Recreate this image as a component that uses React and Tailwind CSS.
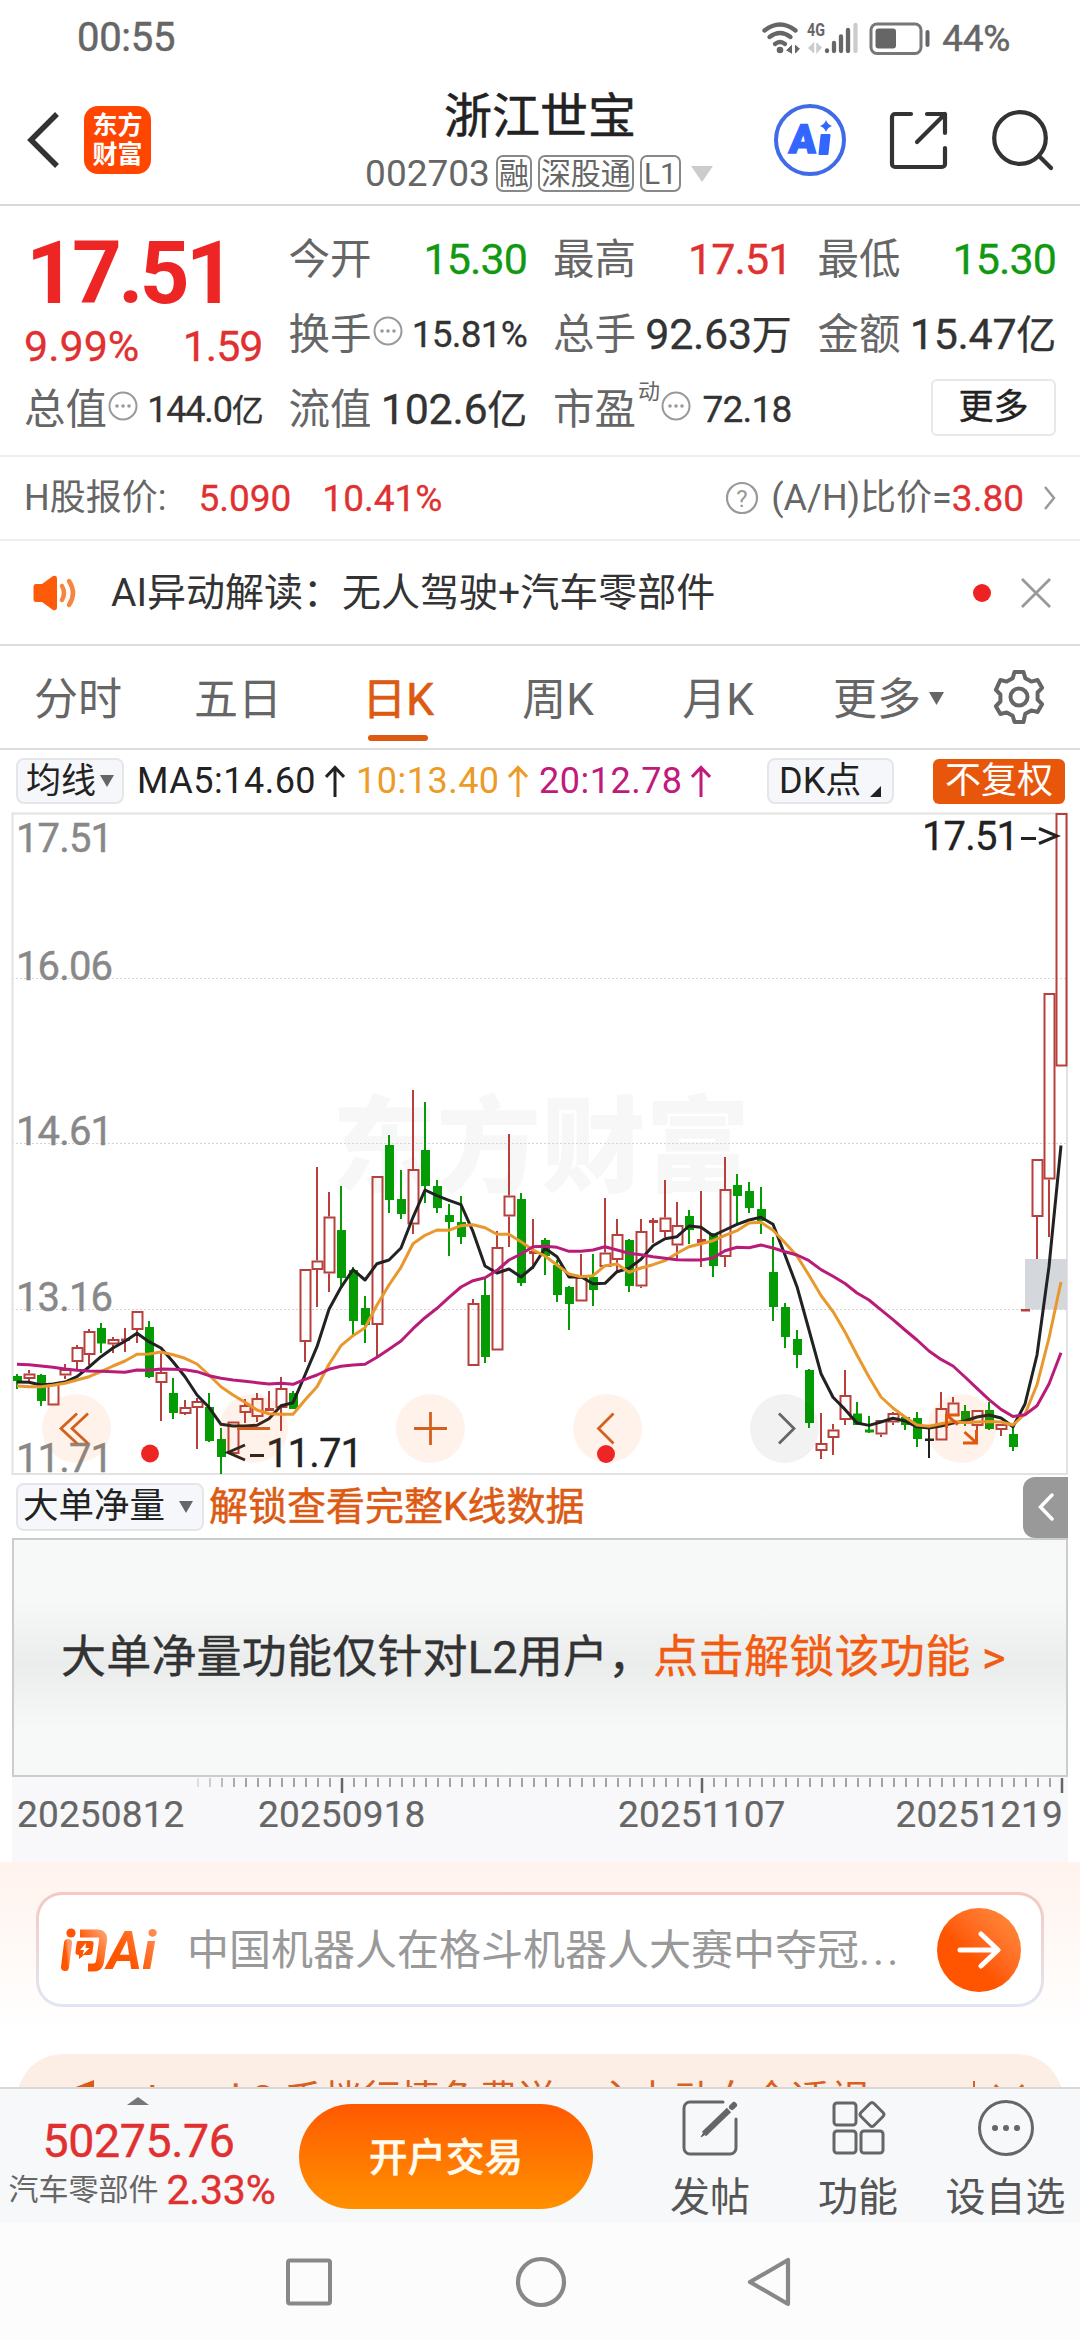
import React from 'react';

const RED = '#b8403c';
const GREEN = '#049b04';

// [direction, body top, body bottom, wick top, wick bottom]
const candles = [
  ['g', 1376, 1381, 1374, 1389], ['r', 1373.5, 1379, 1370, 1382], ['g', 1375, 1401, 1374, 1406], ['r', 1384, 1405.5, 1384, 1405],
  ['r', 1369, 1375.5, 1364, 1379], ['r', 1347, 1362, 1345, 1370], ['r', 1331, 1355, 1329, 1365], ['g', 1328, 1343.5, 1323, 1353],
  ['r', 1339, 1344.5, 1337, 1353], ['f', 1338.5, 1341, 1328, 1352], ['r', 1311, 1330, 1311, 1343], ['g', 1327, 1377, 1321, 1378],
  ['r', 1372, 1383, 1353, 1421], ['g', 1393, 1413, 1378, 1419], ['r', 1407, 1414, 1400, 1415], ['r', 1401, 1408, 1398, 1449],
  ['g', 1407, 1441, 1393, 1442], ['g', 1439, 1457, 1428, 1474], ['r', 1421.5, 1454, 1422, 1454], ['r', 1405, 1413, 1399, 1423],
  ['r', 1398, 1417, 1393, 1422], ['f', 1408, 1411, 1391, 1411], ['r', 1388, 1408, 1377, 1431], ['g', 1393, 1409, 1391, 1409],
  ['r', 1269, 1342, 1269, 1362], ['r', 1260.5, 1270, 1167, 1307], ['r', 1216.5, 1273.5, 1192, 1292], ['g', 1230, 1278, 1186, 1287],
  ['g', 1270, 1321, 1267, 1335], ['g', 1308, 1325, 1296, 1343], ['r', 1176, 1325, 1176, 1357], ['g', 1145, 1200, 1135, 1213],
  ['g', 1199, 1214, 1170, 1219], ['r', 1169, 1224.5, 1090, 1234], ['g', 1150, 1186, 1102, 1203], ['g', 1186, 1208, 1180, 1213],
  ['g', 1215, 1222, 1204, 1256], ['g', 1222, 1237, 1196, 1244], ['r', 1303, 1366, 1299, 1366], ['g', 1295, 1357, 1279, 1363],
  ['r', 1247, 1350.5, 1231, 1350], ['r', 1195.5, 1216.5, 1134, 1247], ['g', 1199, 1283, 1193, 1286], ['f', 1251, 1254, 1219, 1269],
  ['g', 1240, 1256, 1238, 1275], ['g', 1265, 1295, 1260, 1302], ['g', 1287, 1304, 1286, 1330], ['r', 1277, 1301.5, 1254, 1301],
  ['g', 1277, 1290, 1254, 1306], ['r', 1252.5, 1267, 1198, 1267], ['r', 1234, 1260, 1219, 1271], ['g', 1240, 1286, 1239, 1292],
  ['r', 1231, 1286.5, 1219, 1288], ['f', 1220, 1223, 1218, 1243], ['r', 1217.5, 1232, 1180, 1237], ['r', 1225, 1245.5, 1202, 1259],
  ['g', 1216, 1230, 1210, 1244], ['f', 1239, 1243, 1191, 1267], ['g', 1235, 1266, 1233, 1277], ['r', 1189, 1257, 1157, 1267],
  ['g', 1185, 1196, 1174, 1224], ['g', 1191, 1208, 1182, 1213], ['g', 1209, 1221, 1187, 1234], ['g', 1272, 1307, 1237, 1321],
  ['g', 1307, 1337, 1303, 1348], ['g', 1339, 1355, 1330, 1368], ['g', 1370, 1423, 1369, 1428], ['r', 1443, 1451, 1413, 1459],
  ['r', 1429.5, 1438, 1424, 1455], ['r', 1395, 1420, 1370, 1425], ['g', 1413.5, 1425, 1402, 1425], ['h', 1429.5, 1432.5, 1416, 1433],
  ['r', 1420, 1434.5, 1420, 1437], ['r', 1413, 1422.5, 1412, 1425], ['g', 1417, 1425, 1416, 1430], ['g', 1418, 1439, 1412, 1447],
  ['k', 1438.5, 1441, 1429, 1458], ['r', 1408, 1440.5, 1392, 1440], ['r', 1402.5, 1416, 1397, 1416], ['g', 1411, 1421, 1405, 1426],
  ['r', 1410, 1426, 1410, 1430], ['g', 1410, 1429, 1402, 1430], ['r', 1424, 1430, 1424, 1436], ['g', 1434, 1447, 1427, 1451],
  ['f', 1309, 1311.5, 1309, 1311], ['r', 1159, 1217, 1159, 1259], ['r', 993, 1179.5, 993, 1237], ['r', 813, 1066.5, 813, 1066],
];

const ma5 = [
  1382, 1382.3, 1385, 1384, 1382, 1376.7, 1367, 1356.7, 1348, 1341.3, 1333.3, 1341.7, 1348, 1361.7, 1376.7, 1395, 1407.3, 1424.3,
  1426, 1426, 1425.3, 1418.7, 1405.7, 1402.7, 1375, 1346.7, 1309.3, 1287.3, 1269.7, 1280, 1263.7, 1260, 1248, 1217.3, 1190, 1195.7,
  1200.3, 1204.7, 1231.7, 1266, 1273, 1269, 1277, 1267, 1248.3, 1256.7, 1277, 1276.7, 1283.7, 1283.3, 1271.7, 1268.3, 1259.3,
  1245.7, 1238.7, 1236.7, 1226, 1227.3, 1235.7, 1230, 1224.3, 1220, 1217.3, 1224.3, 1255, 1286.7, 1330, 1373.7, 1397.3, 1409.4,
  1423, 1425.4, 1422, 1418.3, 1421, 1426.8, 1428, 1426, 1423, 1421, 1417, 1415, 1418, 1426.8, 1404, 1355, 1266.5, 1145.5,
];

const ma10 = [
  1386, 1386.7, 1386.7, 1385.3, 1383.3, 1380, 1376.7, 1371.7, 1366, 1361, 1354.3, 1354, 1352, 1354.7, 1358.3, 1364, 1375, 1386.7,
  1395, 1402.3, 1410, 1413.7, 1414.3, 1414.3, 1400, 1386.7, 1364.3, 1345.7, 1335.7, 1327.7, 1305, 1285, 1267.3, 1243.7, 1235.3,
  1230, 1230.3, 1225.7, 1224.7, 1227.7, 1234.3, 1234.3, 1241.7, 1250, 1256, 1265, 1274, 1276.7, 1275.7, 1265.7, 1264, 1272.3, 1268,
  1264.7, 1260.7, 1253.3, 1246.7, 1243.7, 1240.7, 1235.3, 1230.7, 1223, 1222.3, 1230.3, 1242.7, 1256, 1275.3, 1295.5, 1311.6,
  1332, 1355, 1377, 1397, 1408, 1417, 1425, 1426.3, 1423.7, 1421.4, 1422.8, 1422, 1421.4, 1422, 1425, 1414, 1384.8, 1338, 1282,
];

const ma20 = [
  1364.3, 1364.7, 1366, 1367.3, 1369, 1370.3, 1371, 1371.3, 1371.7, 1372.3, 1370, 1370.3, 1369, 1369.3, 1369.7, 1371.7, 1375.7,
  1378.3, 1380, 1381.3, 1382.7, 1384, 1383.3, 1384.3, 1379.3, 1375, 1369.3, 1366.3, 1365, 1364.3, 1357.3, 1349.3, 1341, 1328.7,
  1317.7, 1308.3, 1297.3, 1287, 1280.7, 1277.7, 1270.3, 1260, 1254, 1246.7, 1246.3, 1247.3, 1251.3, 1251.3, 1250, 1246.7, 1250,
  1253.3, 1254.7, 1256.7, 1258.3, 1259.7, 1260, 1260, 1258, 1250.7, 1247.3, 1247.7, 1245, 1248, 1251.7, 1255, 1260.7, 1269.6,
  1276.3, 1283.5, 1293, 1300, 1309.8, 1319.6, 1330, 1340, 1351, 1359.4, 1366, 1377, 1388.4, 1399.6, 1409.4, 1416.5, 1414.7,
  1405.8, 1384, 1352.7,
];

const cx = (i) => 17 + i * 12;
const toPoints = (values) => values.map((y, i) => `${cx(i)},${y}`).join(' ');

function Candle({ data, x }) {
  const [kind, top, bottom, high, low] = data;
  if (kind === 'r') {
    return (
      <g stroke={RED} strokeWidth="2" fill="none">
        {high < top && <path d={`M${x} ${high}V${top}`} />}
        {low > bottom && <path d={`M${x} ${bottom}V${low}`} />}
        <rect x={x - 4.5} y={top + 1} width="10" height={bottom - top - 2} />
      </g>
    );
  }
  const color = kind === 'f' ? RED : kind === 'k' ? '#222' : GREEN;
  return (
    <g fill={color}>
      <rect x={x - 1} y={high} width="2" height={low - high} />
      <rect x={x - 4} y={top} width="9" height={bottom - top} />
    </g>
  );
}

function StatusBar() {
  return (
    <div className="flex h-[75px] items-center pl-[77px] pr-[70px] pt-px text-[#666]">
      <span className="text-[40px] leading-none tracking-[-0.3px] [-webkit-text-stroke:0.5px_currentColor]">00:55</span>
      <svg width="178" height="40" viewBox="760 16 178 40" className="ml-auto">
        <g fill="none" stroke="#666" strokeWidth="4.400" strokeLinecap="round">
          <path d="M764.5 28.5Q780 16.500 795.500 28.500" />
          <path d="M769.500 35Q780 27 790.500 35" />
          <path d="M775 42Q780 38 785 42" />
        </g>
        <circle cx="780" cy="48" r="3.300" fill="#666" />
        <path d="M786.500 48.500l5-5v8M799.500 46.500l-4 4.500v-8" fill="#666" stroke="#666" strokeWidth="1" />
        <text x="807" y="34" fontSize="18.500" fontWeight="700" fill="#666" textLength="18" lengthAdjust="spacingAndGlyphs">4G</text>
        <path d="M808.500 46.500l5-5v9.500M821.500 45l-4.500 5v-9" fill="#ccc" stroke="#ccc" strokeWidth="1.500" />
        <g strokeWidth="4.300" strokeLinecap="round" stroke="#666">
          <path d="M827 48.500v.5M834 41v8M841 34.500V49M848 28v21" />
          <path d="M855.500 23v26" stroke="#ccc" />
        </g>
        <rect x="871" y="22" width="50" height="29.500" rx="6" fill="none" stroke="#777" strokeWidth="3" />
        <rect x="875.500" y="26.500" width="20.500" height="20" rx="3" fill="#666" />
        <path d="M927.500 30v13" stroke="#666" strokeWidth="4" strokeLinecap="round" />
      </svg>
      <span className="ml-1 text-[37px] leading-none tracking-[-0.3px] [-webkit-text-stroke:0.5px_currentColor]">44%</span>
    </div>
  );
}

function Header() {
  return (
    <header className="flex h-[131px] items-center justify-between border-b-2 border-[#d8d8d8] pl-[26px] pr-[26px]">
      <div className="flex w-[330px] items-center">
        <svg width="34" height="58" viewBox="0 0 34 58" fill="none" stroke="#333" strokeWidth="5.500">
          <path d="M31 3L5 29l26 26" />
        </svg>
        <div className="ml-6 flex h-[68px] w-[67px] flex-col items-center justify-center rounded-[14px] bg-[#ff4500] text-[25px] font-bold leading-[29px] text-white">
          <span>东方</span>
          <span>财富</span>
        </div>
      </div>
      <div className="flex flex-col items-center pt-1">
        <h1 className="text-[48px] leading-[64px] text-[#222] [-webkit-text-stroke:0.5px_#222]">浙江世宝</h1>
        <div className="flex h-[50px] items-center gap-[6px] text-[30px] text-[#666]">
          <span className="-ml-[2px] text-[37px] leading-none">002703</span>
          <span className="flex h-[37px] items-center rounded-[7px] border-2 border-[#888] px-[1px] leading-none">融</span>
          <span className="flex h-[37px] items-center rounded-[7px] border-2 border-[#888] px-[1px] leading-none">深股通</span>
          <span className="flex h-[37px] items-center rounded-[7px] border-2 border-[#888] px-[2px] leading-none">L1</span>
          <svg width="22" height="16" viewBox="0 0 22 16" className="ml-1"><path d="M0 0h22L11 16z" fill="#ccc" /></svg>
        </div>
      </div>
      <div className="flex w-[330px] items-center justify-end">
        <svg width="74" height="74" viewBox="0 0 74 74">
          <circle cx="37" cy="37" r="34" fill="#fff" stroke="#3f6be8" strokeWidth="4" />
          <text x="15" y="50" fontSize="40" fontWeight="900" fill="#3366ff" stroke="#3366ff" strokeWidth="1.500" transform="skewX(-4) translate(4 0)" textLength="27" lengthAdjust="spacingAndGlyphs">A</text>
          <path d="M48.500 32h8l-2 19h-8z" fill="#3366ff" stroke="#3366ff" strokeWidth="2" strokeLinejoin="round" />
          <path d="M53 17q1.500 4.500 6 6q-4.500 1.500-6 6q-1.500-4.500-6-6q4.500-1.500 6-6z" fill="#3366ff" />
        </svg>
        <svg width="62" height="62" viewBox="0 0 62 62" fill="none" stroke="#333" strokeWidth="4.200" strokeLinecap="round" strokeLinejoin="round" className="ml-[41px]">
          <path d="M23 5H7a3 3 0 0 0-3 3v47a3 3 0 0 0 3 3h47a3 3 0 0 0 3-3V39" />
          <path d="M39 5h18v19M57 5L29 33" />
        </svg>
        <svg width="64" height="64" viewBox="0 0 64 64" fill="none" stroke="#333" strokeWidth="4.200" strokeLinecap="round" className="ml-[40px]">
          <circle cx="30" cy="30" r="25.800" />
          <path d="M49 48l12 12" />
        </svg>
      </div>
    </header>
  );
}

function DotsIcon() {
  return (
    <svg width="30" height="30" viewBox="0 0 30 30" className="mb-2 ml-px shrink-0">
      <circle cx="15" cy="15" r="13.500" fill="none" stroke="#999" strokeWidth="2" />
      <g fill="#999"><circle cx="9" cy="15" r="1.800" /><circle cx="15" cy="15" r="1.800" /><circle cx="21" cy="15" r="1.800" /></g>
    </svg>
  );
}

function Quote({ label, value, unit, color = 'text-[#333]', small, sup }) {
  const size = small
    ? unit ? 'text-[36px] tracking-[-1.2px]' : 'text-[37px] tracking-[-0.8px]'
    : unit ? 'text-[43px] tracking-[-0.3px]' : 'text-[43px] tracking-[-0.9px]';
  return (
    <div className="flex h-[75px] items-center whitespace-nowrap">
      <span className="text-[41.5px] text-[#666]">{label}</span>
      {sup && <span className="mb-9 ml-[2px] text-[22px] text-[#666]">{sup}</span>}
      {small && <DotsIcon />}
      <span className={`ml-auto [-webkit-text-stroke:0.3px_currentColor] ${color} ${size}`}>
        {value}
        {unit && <span className={small ? 'text-[32px]' : 'text-[40px]'}>{unit}</span>}
      </span>
    </div>
  );
}

function QuotePanel() {
  const green = 'text-[#119911]';
  const red = 'text-[#e03030]';
  return (
    <section className="grid h-[251px] grid-cols-4 content-start gap-x-[26px] border-b-2 border-[#eee] px-6 pt-[16px] leading-none">
      <div className="row-span-2 flex flex-col">
        <div className="flex h-[94px] items-end pl-[2px] text-[87px] font-bold leading-[86px] tracking-[-3.8px] text-[#ee2525]">17.51</div>
        <div className={`flex h-[56px] items-center justify-between pt-[5px] text-[43px] [-webkit-text-stroke:0.3px_currentColor] ${red}`}>
          <span>9.99%</span>
          <span className="tracking-[-1px]">1.59</span>
        </div>
      </div>
      <Quote label="今开" value="15.30" color={green} />
      <Quote label="最高" value="17.51" color={red} />
      <Quote label="最低" value="15.30" color={green} />
      <Quote label="换手" value="15.81%" small />
      <Quote label="总手" value="92.63" unit="万" />
      <Quote label="金额" value="15.47" unit="亿" />
      <Quote label="总值" value="144.0" unit="亿" small />
      <Quote label="流值" value="102.6" unit="亿" />
      <Quote label="市盈" value="72.18" small sup="动" />
      <div className="flex h-[75px] items-center justify-end">
        <button className="mb-1 flex h-[57px] w-[125px] items-center justify-center rounded-md border-2 border-[#e8e8e8] text-[35px] text-[#222] [-webkit-text-stroke:0.4px_#222]">更多</button>
      </div>
    </section>
  );
}

function HShareRow() {
  return (
    <section className="flex h-[84px] items-center border-b-2 border-[#eee] pl-6 pr-[23px] text-[36px] leading-none text-[#666]">
      <span>H股报价:</span>
      <span className="ml-[32px] text-[37px] text-[#e03030] [-webkit-text-stroke:0.3px_currentColor]">5.090</span>
      <span className="ml-[31px] text-[37px] text-[#e03030] [-webkit-text-stroke:0.3px_currentColor]">10.41%</span>
      <svg width="34" height="34" viewBox="0 0 34 34" className="ml-auto mr-3">
        <circle cx="17" cy="17" r="15" fill="none" stroke="#999" strokeWidth="2.200" />
        <text x="17" y="25.500" fontSize="24" fill="#999" textAnchor="middle">?</text>
      </svg>
      <span>(A/H)比价=</span>
      <span className="text-[37px] text-[#e03030] [-webkit-text-stroke:0.3px_currentColor]">3.80</span>
      <svg width="14" height="24" viewBox="0 0 14 24" fill="none" stroke="#999" strokeWidth="2.500" className="ml-[19px]"><path d="M2 1l9 11-9 11" /></svg>
    </section>
  );
}

function AiNotice() {
  return (
    <section className="flex h-[105px] items-center border-b-2 border-[#ddd] pl-[32px] pr-[28px] text-[39px] leading-none text-[#333]">
      <svg width="48" height="38" viewBox="0 0 48 38">
        <path d="M4 10h6L21 2q4-1 4 3v28q0 4-4 3l-11-8H4q-2.500 0-2.500-3V13q0-3 2.500-3z" fill="#ff5a08" />
        <path d="M30 12q4 7 0 14M37 7q8 12 0 24" fill="none" stroke="#f5853f" strokeWidth="4.500" strokeLinecap="round" />
      </svg>
      <span className="ml-[31px] pt-px">AI异动解读：无人驾驶+汽车零部件</span>
      <span className="ml-auto h-[18px] w-[18px] rounded-full bg-[#ee2222]" />
      <svg width="32" height="32" viewBox="0 0 32 32" stroke="#999" strokeWidth="2.800" className="ml-[29px]"><path d="M2 2l28 28M30 2L2 30" /></svg>
    </section>
  );
}

function Tabs() {
  const tabs = ['分时', '五日', '日K', '周K', '月K'];
  return (
    <nav className="flex h-[104px] items-center border-b-2 border-[#ddd] text-[44px] leading-none text-[#666]">
      {tabs.map((tab) => (
        <div key={tab} className="relative flex h-full w-[160px] items-center justify-center pr-[4px] pt-[6px]">
          <span className={tab === '日K' ? 'text-[#dd5a12] [-webkit-text-stroke:0.7px_currentColor]' : ''}>{tab}</span>
          {tab === '日K' && <span className="absolute bottom-[7px] left-[48px] h-[6px] w-[60px] rounded-sm bg-[#dd5a12]" />}
        </div>
      ))}
      <div className="ml-[33px] flex items-center pt-[6px]">
        更多
        <svg width="15" height="13" viewBox="0 0 15 13" className="mb-1 ml-2"><path d="M0 0h15L7.500 13z" fill="#666" /></svg>
      </div>
      <svg width="56" height="56" viewBox="0 0 56 56" fill="none" stroke="#666" strokeWidth="4" strokeLinejoin="round" className="ml-auto mr-[33px]">
        <path d="M23.500 3h9l1.800 6.200 6 3.400 6.300-1.600 4.500 7.800-4.500 4.700v7l4.500 4.700-4.500 7.800-6.300-1.600-6 3.400L32.500 53h-9l-1.800-6.200-6-3.400L9.400 45l-4.500-7.800 4.500-4.700v-7l-4.500-4.700L9.400 11l6.300 1.600 6-3.400z" />
        <circle cx="28" cy="28" r="8.500" />
      </svg>
    </nav>
  );
}

function UpArrow({ color }) {
  return (
    <svg width="20" height="32" viewBox="0 0 20 32" fill="none" stroke={color} strokeWidth="3"><path d="M10 32V2M1 12l9-9.500L19 12" /></svg>
  );
}

function MaBar() {
  return (
    <div className="flex h-[62px] items-center pl-4 pr-[15px] text-[36px] leading-none">
      <div className="flex h-[46px] w-[108px] items-center justify-center rounded-lg border-2 border-[#e4e6ea] bg-[#f6f7fa] text-[35px] text-[#222]">
        均线
        <svg width="14" height="12" viewBox="0 0 14 12" className="ml-1"><path d="M0 0h14L7 12z" fill="#666" /></svg>
      </div>
      <div className="ml-[13px] flex w-[208px] items-center justify-between tracking-[0.5px] text-[#222]"><span>MA5:14.60</span><UpArrow color="#222" /></div>
      <div className="ml-[11px] flex w-[172px] items-center justify-between tracking-[0.5px] text-[#ec9a28]"><span>10:13.40</span><UpArrow color="#ec9a28" /></div>
      <div className="ml-[11px] flex w-[172px] items-center justify-between tracking-[0.5px] text-[#c01a7c]"><span>20:12.78</span><UpArrow color="#c01a7c" /></div>
      <div className="ml-auto flex h-[46px] w-[127px] items-center rounded-lg border-2 border-[#e4e6ea] bg-[#f6f7fa] pl-[10px] text-[#222]">
        DK点
        <svg width="11" height="11" viewBox="0 0 11 11" className="ml-[9px] mt-5"><path d="M11 0v11H0z" fill="#222" /></svg>
      </div>
      <div className="ml-[39px] flex h-[45px] w-[132px] items-center justify-center rounded-md bg-[#e8560c] text-white">不复权</div>
    </div>
  );
}

function KLineChart() {
  const labels = [['17.51', 852], ['16.06', 980], ['14.61', 1145], ['13.16', 1311], ['11.71', 1472]];
  return (
    <svg width="1080" height="664" viewBox="0 812 1080 664" className="block">
      <text x="332" y="1184" fontSize="104" fontWeight="900" fill="#f7f7f7" textLength="418">东方财富</text>
      <g stroke="#d4d4d4" strokeWidth="1.200" strokeDasharray="2 2">
        <path d="M12 978.500H1067M12 1143.500H1067M12 1309.500H1067" />
      </g>
      <path d="M12.500 813.500H1067V1474H12.500z" fill="none" stroke="#e2e2e2" strokeWidth="2" />
      <rect x="1025" y="1259" width="42" height="50.500" fill="#d4d7dc" />
      <g fontSize="40" fill="#888" stroke="#888" strokeWidth="0.400">
        {labels.map(([label, y]) => (
          <text key={label} x="16" y={y} textLength="97">{label}</text>
        ))}
      </g>
      {candles.map((c, i) => <Candle key={i} data={c} x={cx(i)} />)}
      <g fill="none" strokeWidth="3" strokeLinejoin="round">
        <polyline points={toPoints(ma5)} stroke="#222" />
        <polyline points={toPoints(ma10)} stroke="#e8982c" />
        <polyline points={toPoints(ma20)} stroke="#b81c78" />
      </g>
      <g fontSize="40" fill="#222" stroke="#222" strokeWidth="0.300">
        <text x="922" y="850" textLength="97">17.51</text>
        <text x="266" y="1467" textLength="97">11.71</text>
      </g>
      <g fill="none" stroke="#222" strokeWidth="3">
        <path d="M1021 838.500h15M1039 828.500l18 7.500-18 7.500M264 1455.500h-14M245 1445l-17 7.500 17 7.500" />
      </g>
      <g fill="#ff5500" fillOpacity="0.080">
        <circle cx="76.500" cy="1428.500" r="34.500" />
        <circle cx="253.500" cy="1428.500" r="34.500" />
        <circle cx="430.500" cy="1428.500" r="34.500" />
        <circle cx="607.500" cy="1428.500" r="34.500" />
        <circle cx="961.500" cy="1428.500" r="34.500" />
      </g>
      <circle cx="784.500" cy="1428.500" r="34.500" fillOpacity="0.050" />
      <g fill="none" stroke="#d4601e" strokeWidth="2.800">
        <path d="M77 1413.500l-16 15 16 15M88 1413.500l-16 15 16 15" />
        <path d="M237 1428.500h33M414 1428.500h33M430.500 1412v33" />
        <path d="M613.500 1413.500l-15 15 15 15" />
        <path d="M779 1413.500l15 15-15 15" stroke="#666" />
        <path d="M946.500 1428v-13h13M947 1415.500l11 9M964.500 1432l11 10M963 1443h13.500v-13" stroke="#e0580e" strokeWidth="3" />
      </g>
      <circle cx="150" cy="1453.500" r="9" fill="#ee2525" />
      <circle cx="606" cy="1454" r="9" fill="#ee2525" />
    </svg>
  );
}

function IndicatorPanel() {
  return (
    <>
      <div className="flex h-[62px] items-center pl-4 pr-3 leading-none">
        <div className="flex h-[48px] w-[188px] items-center rounded-lg border-2 border-[#e4e6ea] bg-[#f6f7fa] pl-[5px] text-[35.5px] text-[#222]">
          大单净量
          <svg width="14" height="12" viewBox="0 0 14 12" className="ml-[14px]"><path d="M0 0h14L7 12z" fill="#666" /></svg>
        </div>
        <span className="ml-[5px] text-[39px] text-[#dc5a14] [-webkit-text-stroke:0.5px_currentColor]">解锁查看完整K线数据</span>
        <div className="ml-auto flex h-[61px] w-[45px] items-center justify-center rounded-l-xl bg-[#999]">
          <svg width="16" height="28" viewBox="0 0 16 28" fill="none" stroke="#fff" strokeWidth="3.500" strokeLinecap="round"><path d="M14 2L2.500 14 14 26" /></svg>
        </div>
      </div>
      <div className="mx-3 flex h-[239px] items-center whitespace-nowrap border-2 border-[#ccc] bg-linear-to-b from-[#f7f8f8] from-25% via-[#ebeded] via-53% to-[#f7f8f8] to-80% pl-[47px] text-[45px] leading-none text-[#333] [-webkit-text-stroke:0.4px_currentColor]">
        <span className="tracking-[0.2px]">大单净量功能仅针对L2用户，</span>
        <span className="tracking-[0.3px] text-[#f25c12]">点击解锁该功能 &gt;</span>
      </div>
    </>
  );
}

function TimeAxis() {
  const ticks = Array.from({ length: 73 }, (_, i) => 198 + i * 12);
  return (
    <div className="mx-3 h-[85px] bg-[#f8f8fb]">
      <svg width="1056" height="19" viewBox="12 0 1056 19" className="block">
        {ticks.map((x, i) => {
          const major = (x - 342) % 360 === 0;
          return (
            <path key={x} d={`M${x} 1v${major ? 15 : 9}`} stroke={major ? '#666' : '#999'} strokeWidth={major ? 2.5 : 1.8} opacity={Math.min(1, 0.3 + i * 0.2)} />
          );
        })}
      </svg>
      <div className="flex text-[37px] leading-[38px] tracking-[0.15px] text-[#666] [-webkit-text-stroke:0.2px_currentColor]">
        <span className="ml-[5px] w-[241px]">20250812</span>
        <span className="w-[360px]">20250918</span>
        <span>20251107</span>
        <span className="ml-auto mr-[5px]">20251219</span>
      </div>
    </div>
  );
}

function AskAi() {
  return (
    <section className="h-[225px] overflow-hidden bg-linear-to-b from-[#fff3ee] to-white to-75% pt-[30px]">
      <div className="mx-9 rounded-[26px] bg-linear-to-b from-[#f5c8c0] to-[#e0e7f3] p-[3px]">
        <div className="flex h-[109px] items-center rounded-[23px] bg-white pl-5 pr-[20px]">
          <svg width="100" height="50" viewBox="58 1924 100 50">
            <defs>
              <linearGradient id="ask" x1="0" x2="1" y1="1" y2="0">
                <stop offset="0.400" stopColor="#ff5500" />
                <stop offset="1" stopColor="#ff9a66" />
              </linearGradient>
            </defs>
            <g fill="none" stroke="url(#ask)" strokeWidth="8" strokeLinecap="round">
              <path d="M67 1942l-3 24" />
              <path d="M79 1932.500h17q7 0 6 7l-3 21q-1 6-6 6h-6" strokeLinecap="butt" />
            </g>
            <circle cx="70" cy="1932" r="4.600" fill="#ff5500" />
            <path d="M77 1940h13q3 0 2.500 3l-1 8q-.5 3-3.500 3h-5l-5 4v-4q-4 0-3.500-3l1-8q.5-3 1.500-3z" fill="#ff5500" />
            <path d="M85 1942l-6 7h4l-1.500 5 7-7h-4z" fill="#fff" />
            <text x="106" y="1968" fontSize="54" fontWeight="700" fontStyle="italic" fill="url(#ask)" textLength="49" lengthAdjust="spacingAndGlyphs">Ai</text>
          </svg>
          <span className="ml-[28px] whitespace-nowrap pt-[2px] text-[42px] leading-none text-[#999]">中国机器人在格斗机器人大赛中夺冠<span className="tracking-[3px]">...</span></span>
          <div className="ml-auto flex h-[84px] w-[84px] shrink-0 items-center justify-center rounded-full bg-linear-to-bl from-[#ff9040] to-[#ff5500] to-60%">
            <svg width="44" height="38" viewBox="0 0 44 38" fill="none" stroke="#fff" strokeWidth="5" strokeLinecap="round" strokeLinejoin="round"><path d="M3 19h37M24 3l17 16-17 16" /></svg>
          </div>
        </div>
      </div>
      <div className="mx-[17px] mt-[47px] flex h-[92px] items-center rounded-[46px] bg-[#fdeee5] pl-[51px] pr-[38px] text-[39px] leading-none text-[#d8601c]">
        <svg width="48" height="42" viewBox="0 0 48 42" fill="#dc5a14"><path d="M0 11L26 1v40L0 31z" /></svg>
        <span className="ml-[31px] w-[137px] whitespace-nowrap text-[41px] tracking-[-0.3px]">Level-2</span>
        <span className="whitespace-nowrap">千档行情免费送，主力动向全透视</span>
        <span className="ml-auto h-[38px] w-[2px] bg-[#d8601c]" />
        <svg width="32" height="34" viewBox="0 0 32 34" stroke="#d8601c" strokeWidth="3" className="ml-[18px]"><path d="M2 2l28 30M30 2L2 32" /></svg>
      </div>
    </section>
  );
}

function BottomBar() {
  return (
    <footer className="flex h-[136px] border-t-2 border-[#d8d8d8] bg-[#f7f8fa] leading-none">
      <div className="flex w-[285px] flex-col items-center pt-[8px]">
        <svg width="22" height="8" viewBox="0 0 22 8" className="-ml-2"><path d="M0 8L11 0l11 8z" fill="#777" /></svg>
        <span className="mr-[7px] mt-[13px] text-[46.5px] tracking-[-0.4px] text-[#e03030] [-webkit-text-stroke:0.4px_currentColor]">50275.76</span>
        <div className="mt-[5px] flex items-center">
          <span className="text-[30px] text-[#666]">汽车零部件</span>
          <span className="ml-[8px] text-[41px] tracking-[-0.2px] text-[#e03030] [-webkit-text-stroke:0.4px_currentColor]">2.33%</span>
        </div>
      </div>
      <button className="ml-[15px] mt-[15px] flex h-[105px] w-[295px] items-center justify-center rounded-full bg-linear-to-b from-[#ff5800] to-[#ff9000] pt-1 text-[38.5px] font-medium text-[#fffbee] [-webkit-text-stroke:0.5px_currentColor]">开户交易</button>
      <div className="ml-[42px] flex flex-1 text-[40px] text-[#555]">
        <div className="flex w-[148px] flex-col items-center pl-[2px] pt-[10px]">
          <svg width="58" height="58" viewBox="0 0 58 58" fill="none" stroke="#666" strokeWidth="3" strokeLinecap="round">
            <path d="M42 3H9a6 6 0 0 0-6 6v40a6 6 0 0 0 6 6h40a6 6 0 0 0 6-6V20" />
            <path d="M23 35L48 11" strokeWidth="6" strokeLinecap="butt" />
            <path d="M25 30l-5 8 8-5z" fill="#666" strokeWidth="1" />
            <path d="M51 8l2-2" strokeWidth="6" />
          </svg>
          <span className="mt-[21px]">发帖</span>
        </div>
        <div className="flex w-[148px] flex-col items-center pl-[2px] pt-[10px]">
          <svg width="58" height="58" viewBox="0 0 58 58" fill="none" stroke="#666" strokeWidth="3">
            <rect x="5" y="4" width="22" height="22" rx="3" />
            <rect x="5" y="32" width="22" height="22" rx="3" />
            <rect x="32" y="32" width="22" height="22" rx="3" />
            <path d="M41 4.500q2-2 4 0l9 9q2 2 0 4l-9 9q-2 2-4 0l-9-9q-2-2 0-4z" />
          </svg>
          <span className="mt-[21px]">功能</span>
        </div>
        <div className="flex w-[149px] flex-col items-center pt-[10px]">
          <svg width="58" height="58" viewBox="0 0 58 58" fill="none" stroke="#666" strokeWidth="3">
            <circle cx="29" cy="29" r="26.500" />
            <g fill="#666" stroke="none"><circle cx="18" cy="29" r="3" /><circle cx="29" cy="29" r="3" /><circle cx="40" cy="29" r="3" /></g>
          </svg>
          <span className="mt-[21px] whitespace-nowrap">设自选</span>
        </div>
      </div>
    </footer>
  );
}

function SystemNav() {
  return (
    <div className="flex h-[117px] items-center justify-between bg-[#fcfcfc] pl-[283px] pr-[287px]">
      <svg width="52" height="52" viewBox="0 0 52 52" fill="none" stroke="#888" strokeWidth="4"><rect x="5" y="4.500" width="42" height="43" rx="2" /></svg>
      <svg width="52" height="52" viewBox="0 0 52 52" fill="none" stroke="#888" strokeWidth="4.200"><circle cx="26" cy="26" r="23" /></svg>
      <svg width="46" height="52" viewBox="0 0 46 52" fill="none" stroke="#888" strokeWidth="4.200" strokeLinejoin="round"><path d="M3 26L41 4v44z" /></svg>
    </div>
  );
}

export default function App() {
  return (
    <div className="flex h-[2340px] w-[1080px] flex-col overflow-hidden bg-white font-[Roboto,'Noto_Sans_CJK_SC',sans-serif] [&>*]:shrink-0">
      <StatusBar />
      <Header />
      <QuotePanel />
      <HShareRow />
      <AiNotice />
      <Tabs />
      <MaBar />
      <KLineChart />
      <IndicatorPanel />
      <TimeAxis />
      <AskAi />
      <BottomBar />
      <SystemNav />
    </div>
  );
}
